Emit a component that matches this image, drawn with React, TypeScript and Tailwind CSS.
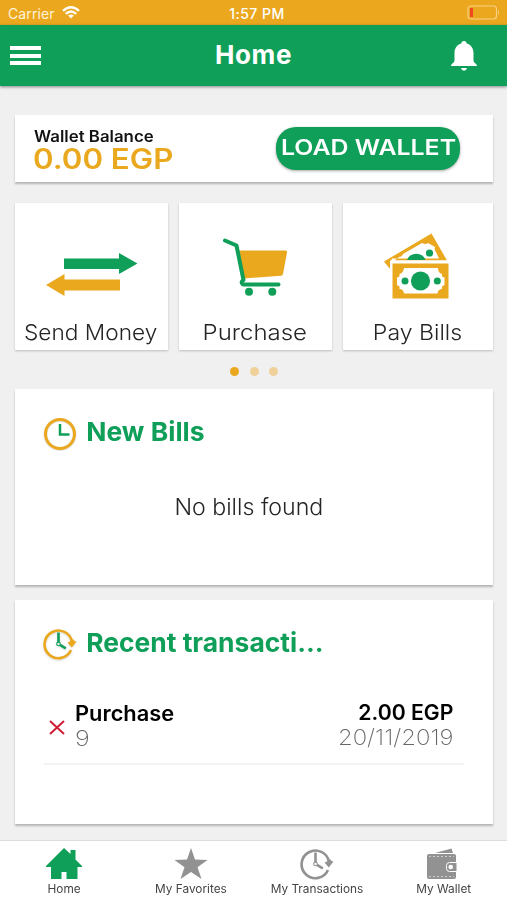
import type { ReactNode } from 'react';

const GREEN = '#0f9f59';
const GOLD = '#eaa81f';

function StatusBar() {
  return (
    <div className="relative flex h-[25px] items-center justify-between bg-[#eba81f] pl-2 pr-[7px] text-sm leading-[28px] text-white">
      <div className="flex items-center gap-[7px]">
        <span className="h-[26px] tracking-[0.1px] text-[#fff3d8]">Carrier</span>
        <svg width="18" height="13" viewBox="0 0 18 13" fill="none" stroke="#fff" strokeWidth="2.3">
          <path d="M1 4.8Q9-2.2 17 4.8" />
          <path d="M3.8 7.8Q9 3.2 14.2 7.8" />
          <path d="M6.1 9.6Q9 7.2 11.9 9.6L9 12.6Z" fill="#fff" stroke="none" />
        </svg>
      </div>
      <span className="absolute inset-x-0 top-0 pl-[7px] text-center font-medium tracking-[0.5px]">1:57 PM</span>
      <svg width="34" height="15" viewBox="0 0 34 15">
        <rect x="2" y="1" width="28.5" height="13" rx="3" fill="none" stroke="#f7cf83" strokeWidth="1.2" />
        <rect x="4" y="3" width="3" height="9" fill="#f0471f" />
        <path d="M32 5q2 2.5 0 5z" fill="#f7cf83" />
      </svg>
    </div>
  );
}

function Header() {
  return (
    <header className="z-10 flex h-[61px] items-center justify-between bg-[#0f9f59] pl-[10px] pr-[30px] shadow-[0_1px_3px_rgba(0,0,0,0.45)]">
      <div className="flex w-[31px] flex-col gap-[3.5px]">
        <i className="h-1 bg-white" />
        <i className="h-1 bg-white" />
        <i className="h-1 bg-white" />
      </div>
      <h1 className="h-[34px] pl-[15px] text-[26px] leading-[31px] font-bold tracking-[0.6px] text-white">Home</h1>
      <svg width="26" height="30" viewBox="0 0 26 30" fill="#fff">
        <path d="M13 0a2.7 2.7 0 0 0-2.7 2.6C6 3.8 3.500 7.500 3.500 12v7.500C3.500 22 0 22.600 0 25h26c0-2.400-3.500-3-3.500-5.500V12c0-4.500-2.500-8.200-6.800-9.400A2.700 2.700 0 0 0 13 0Z" />
        <path d="M10 27h6q-.5 2.700-3 2.700T10 27Z" />
      </svg>
    </header>
  );
}

function SendIcon() {
  return (
    <svg width="94" height="44" viewBox="0 0 94 44">
      <path d="M19 5.500h55V0L92.500 10.500 74 21V16H19Z" fill={GREEN} />
      <path d="M1 32 19.500 21v5.500H75v11H19.500V43Z" fill={GOLD} />
    </svg>
  );
}

function CartIcon() {
  return (
    <svg width="66" height="60" viewBox="0 0 66 60">
      <path d="M17 13.500H63.500a1.500 1.500 0 0 1 1.500 2L61 37q-.4 1.600-2 1.800L22 41.500Z" fill={GOLD} />
      <path d="M3 3.500 14.500 8.500 21.500 43Q18 45 21 47.500H56.500" fill="none" stroke={GREEN} strokeWidth="4" strokeLinecap="round" strokeLinejoin="round" />
      <circle cx="27" cy="54.700" r="4" fill={GREEN} />
      <circle cx="50.300" cy="54.700" r="4" fill={GREEN} />
    </svg>
  );
}

function MoneyIcon() {
  return (
    <svg width="65" height="67" viewBox="0 0 65 67">
      <path d="M0 28.500 47.500.500 63 27.500H8.500V39Z" fill={GOLD} />
      <path d="M6 31 15 24q3 0 4-3L38 10q4 2 6 0l7 4q-1 3 1 5l3 6.500H8Z" fill="#fff" />
      <path d="M23 27a9.500 8 0 0 1 18.500 0Z" fill={GREEN} />
      <circle cx="45.500" cy="20" r="3.600" fill={GREEN} />
      <path d="M6 27.500H65V67H6Z" fill="#fff" />
      <path d="M8.500 30.500H64.500V65.500H8.500Z" fill={GOLD} />
      <path d="M20 35H54q0 5 4 6v2.500l2.500 1v7.500l-2.500 1.500V56q-4 0-4.500 4.500H20Q19.500 56 15.500 56v-2.500L13 52v-7.500l2.500-1V41q4-1 4.500-6Z" fill="#fff" />
      <circle cx="36.500" cy="48" r="9.600" fill={GREEN} />
      <circle cx="21" cy="48" r="3.500" fill={GREEN} />
      <circle cx="53.300" cy="48" r="3.500" fill={GREEN} />
    </svg>
  );
}

function RecentClock({ ring, hands }: { ring: string; hands: string }) {
  return (
    <svg width="34" height="32" viewBox="0 0 34 32" fill="none">
      <path d="M29 14A13.800 13.800 0 1 0 28 22" stroke={ring} strokeWidth="2.600" />
      <path d="M24.500 14.500 27 13.500 30 11 31.500 13 33.500 13.500 28.800 19.500Z" fill={ring} />
      <path d="M15.500 4.500V14M17 16.800 22.800 20.300" stroke={hands} strokeWidth="2.600" />
      <circle cx="15.500" cy="15.900" r="1.800" stroke={hands} strokeWidth="1.100" />
    </svg>
  );
}

function Tile({ label, width, text, children }: { label: string; width: string; text: string; children: ReactNode }) {
  return (
    <div className={`flex h-[147px] flex-col items-center bg-white shadow-[0_1px_2px_rgba(0,0,0,0.22)] ${width}`}>
      <div className="flex h-[114px] w-full flex-col items-center">{children}</div>
      <div className={`text-[22px] leading-[30px] whitespace-nowrap font-light text-[#252525] ${text}`}>{label}</div>
    </div>
  );
}

function Tab({ label, children }: { label: string; children: ReactNode }) {
  return (
    <div className="flex flex-1 flex-col items-center">
      <div className="flex h-[40px] items-start pt-[7px]">{children}</div>
      <span className="scale-x-[1.03] text-[11.5px] leading-[16px] whitespace-nowrap text-[#444]">{label}</span>
    </div>
  );
}

export default function App() {
  return (
    <div className="flex h-[900px] w-[507px] flex-col overflow-hidden bg-[#f0f0f0] font-['Inter',sans-serif]">
      <StatusBar />
      <Header />
      <main className="flex flex-1 flex-col pt-[29px] pr-[14px] pl-[15px]">
        <section className="flex h-[67px] justify-between bg-white pt-3 pr-[33px] pl-[19px] shadow-[0_2px_2px_rgba(0,0,0,0.25)]">
          <div className="whitespace-nowrap">
            <div className="h-[19px] origin-left scale-x-[1.085] text-[15.5px] leading-[19px] font-semibold text-[#111]">Wallet Balance</div>
            <div className="-ml-px origin-left scale-x-[1.115] text-[28px] leading-[27px] font-semibold text-[#eaa81f]">0.00 EGP</div>
          </div>
          <button className="flex h-[43px] w-[184px] justify-center rounded-[20px] bg-[#0f9f59] text-[22px] leading-[40px] font-semibold whitespace-nowrap text-white shadow-[0_1px_3px_rgba(0,0,0,0.35)]">
            <span className="scale-x-[1.13]">LOAD WALLET</span>
          </button>
        </section>

        <section className="mt-[21px] flex gap-[11px]">
          <Tile label="Send Money" width="w-[153px]" text="pr-px scale-x-[1.03]">
            <div className="pt-[50px]"><SendIcon /></div>
          </Tile>
          <Tile label="Purchase" width="w-[153px]" text="pr-0.5 scale-x-[1.09]">
            <div className="pt-[34px] pr-0.5"><CartIcon /></div>
          </Tile>
          <Tile label="Pay Bills" width="w-[150px]" text="scale-x-[1.05]">
            <div className="pt-[30px] pr-[3px]"><MoneyIcon /></div>
          </Tile>
        </section>

        <div className="flex h-[39px] items-center justify-center gap-[10.5px] pt-[3px]">
          <i className="size-[9px] rounded-full bg-[#eaa81f]" />
          <i className="size-[9px] rounded-full bg-[#f0d19a]" />
          <i className="size-[9px] rounded-full bg-[#f0d19a]" />
        </div>

        <section className="h-[196px] bg-white pt-[27px] shadow-[0_2px_2px_rgba(0,0,0,0.25)]">
          <div className="flex pl-[28px]">
            <svg className="mt-px" width="34" height="34" viewBox="0 0 34 34" fill="none">
              <circle cx="17" cy="17.500" r="14.500" stroke="#e7e7e7" strokeWidth="4" />
              <circle cx="17" cy="17" r="14.500" stroke={GOLD} strokeWidth="3" />
              <path d="M17 7V17.500H26.500" stroke={GREEN} strokeWidth="2.500" />
            </svg>
            <h2 className="origin-left scale-x-[1.02] pl-[9px] text-[26px] leading-[31px] font-bold text-[#0f9f59]">New Bills</h2>
          </div>
          <p className="scale-x-[1.03] pt-[40px] pr-[10px] text-center text-[22.5px] leading-[31px] font-light text-[#252525]">No bills found</p>
        </section>

        <section className="mt-[15px] h-[224px] bg-white pt-[27px] shadow-[0_2px_2px_rgba(0,0,0,0.25)]">
          <div className="flex pl-[28px]">
            <div className="pt-px drop-shadow-[0_1px_1px_rgba(0,0,0,0.15)]"><RecentClock ring={GOLD} hands={GREEN} /></div>
            <h2 className="origin-left scale-x-[1.017] pl-[9px] text-[26px] leading-[31px] font-bold text-[#0f9f59]">Recent transacti...</h2>
          </div>
          <div className="mx-[29px] mt-[37px] flex h-[68px] border-b-2 border-[#f3f3f3] pr-[11px] pl-[5px]">
            <svg className="mt-[23px]" width="16" height="15" viewBox="0 0 16 15">
              <path d="M1 1 15 14M15 1 1 14" stroke="#cf1f35" strokeWidth="2" />
            </svg>
            <div className="flex flex-1 flex-col pl-[10px]">
              <div className="h-[31px] origin-left scale-x-[1.04] text-[21px] leading-[33px] font-semibold text-black">Purchase</div>
              <div className="origin-left scale-x-[1.15] text-[22px] leading-[20px] font-extralight text-[#666]">9</div>
            </div>
            <div className="flex flex-col text-right whitespace-nowrap">
              <div className="h-[30px] origin-right scale-x-[1.01] text-[21px] leading-[32px] font-semibold text-black">2.00 EGP</div>
              <div className="origin-right scale-x-[1.085] text-[22px] leading-[20px] font-extralight text-[#666]">20/11/2019</div>
            </div>
          </div>
        </section>
      </main>

      <nav className="flex h-[60px] border-t border-[#ddd] bg-white pl-px">
        <Tab label="Home">
          <svg width="36" height="31" viewBox="0 0 36 31" fill={GREEN}>
            <path d="M18 0 24.500 6V2H29.500V11.500L36 18v1H31.500V31H20.500V24H15.500V31H5V19H0v-1Z" />
          </svg>
        </Tab>
        <Tab label="My Favorites">
          <svg width="34" height="31" viewBox="0 0 34 31" fill="#929292">
            <path d="M17 0 21 11.500 33.500 12 23.500 19.200 27.500 31 17 24 6.500 31 10.500 19.200.500 12 13 11.500Z" />
          </svg>
        </Tab>
        <Tab label="My Transactions">
          <RecentClock ring="#929292" hands="#929292" />
        </Tab>
        <Tab label="My Wallet">
          <svg className="mr-0.5" width="31" height="31" viewBox="0 0 31 31">
            <path d="M8 5 24.500.500 26 5Z" fill="#929292" />
            <path d="M2 6H27q2 0 2 2V29q0 2-2 2H2Q0 31 0 29V8Q0 6 2 6Z" fill="#929292" />
            <path d="M2 8.500H27M2 28.500H27" stroke="#ddd" strokeWidth=".8" strokeDasharray="2 2" />
            <path d="M30 14.500H22.500q-3 0-3 3v3q0 3 3 3H30Z" fill="#929292" stroke="#fff" />
            <circle cx="23.700" cy="19" r="2.300" fill="#fff" />
          </svg>
        </Tab>
      </nav>
    </div>
  );
}
